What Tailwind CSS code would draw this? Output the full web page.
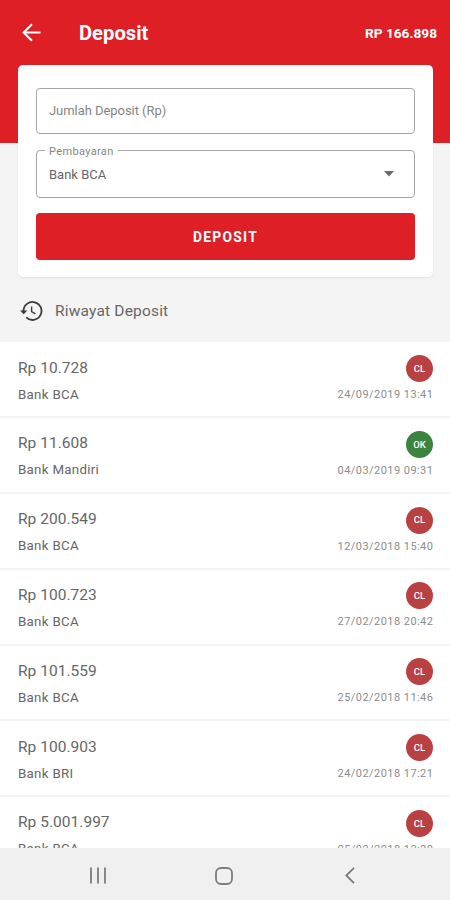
<!DOCTYPE html>
<html lang="id">
<head>
    <meta charset="UTF-8">
    <meta name="viewport" content="width=device-width, initial-scale=1.0">
    <title>Deposit</title>
    <script src="https://cdn.jsdelivr.net/npm/@tailwindcss/browser@4"></script>
</head>
<body class="bg-[#f4f4f4] font-['Roboto',sans-serif] text-[#666666] w-[450px] h-[900px] overflow-hidden flex flex-col">

    <header class="bg-[#de1f26] h-[143px] shrink-0 text-white">
        <div class="flex items-center h-[66px] pl-[22px] pr-[13px]">
            <svg class="w-[19px] h-[19px] -mt-[2px]" viewBox="0 0 19 19" fill="none" stroke="currentColor" stroke-width="2.1"><path d="M18.5 9.5H2M10 1.2L1.7 9.5l8.3 8.3"/></svg>
            <h1 class="ml-[38px] text-[20.2px] font-bold pt-px">Deposit</h1>
            <span class="ml-auto text-[13.7px] font-bold">RP 166.898</span>
        </div>
    </header>

    <section class="ml-[18px] mr-[17px] -mt-[78px] h-[212px] shrink-0 bg-white rounded-[5px] shadow-[0_1px_2px_rgba(0,0,0,0.08)] px-[18px] pt-[23px]">
        <div class="h-[46px] border border-[#a6a6a6] rounded-[4px] flex items-center px-3 text-[13px] tracking-[-0.05px] text-[#858585]">Jumlah Deposit (Rp)</div>
        <div class="relative mt-4 h-[48px] border border-[#a6a6a6] rounded-[4px] flex items-center justify-between pl-3 pr-5 text-[13px]">
            <span class="absolute left-2 -top-[6px] px-1 bg-white text-[11px] leading-[14px] tracking-[0.35px] text-[#858585]">Pembayaran</span>
            <span class="pt-px">Bank BCA</span>
            <svg class="w-[10px] h-[6px]" viewBox="0 0 10 6" fill="#6a6a6a"><path d="M0 0h10L5 5.5z"/></svg>
        </div>
        <button class="mt-[15px] w-full h-[47px] pt-[2px] bg-[#de1f26] rounded-[4px] text-white text-[13.8px] font-bold tracking-[1.3px]">DEPOSIT</button>
    </section>

    <div class="h-[65.4px] shrink-0 flex items-center gap-3 pl-5 pt-[4px]">
        <svg class="w-[23px] h-[20px] -mt-[2px]" viewBox="0 0 23 20" fill="none" stroke="#3c3c3c" stroke-width="1.8"><path d="M3.5 10a9 9 0 1 1 2.7 6.4"/><path d="M0 9.6h7.4L3.7 13.3z" fill="#3c3c3c" stroke="none"/><path d="M11.6 5.5v5.1l3.8 2.3" stroke-width="1.4"/></svg>
        <h2 class="text-[15.5px] tracking-[0.18px]">Riwayat Deposit</h2>
    </div>

    <ul id="history" class="flex-1 min-h-0 overflow-hidden bg-white"></ul>

    <nav class="h-[52px] shrink-0 bg-[#f0f0f0] flex items-center pl-[90px] text-[#7c7c7c]">
        <svg class="w-[16px] h-[17px] mt-[3px]" viewBox="0 0 16 17" fill="none" stroke="currentColor" stroke-width="1.8"><path d="M1 .5v16M8 .5v16M15 .5v16"/></svg>
        <svg class="w-[18px] h-[18px] mt-[3px] ml-[109px]" viewBox="0 0 18 18" fill="none" stroke="currentColor" stroke-width="1.8"><rect x="1" y="1" width="16" height="16" rx="5"/></svg>
        <svg class="w-[10px] h-[17px] mt-[3px] ml-[112px]" viewBox="0 0 10 17" fill="none" stroke="currentColor" stroke-width="1.8"><path d="M9 .8L1.3 8.5 9 16.2"/></svg>
    </nav>

    <template id="row">
        <li class="h-[75.8px] border-b-2 border-[#f3f3f3] flex justify-between pl-[18px] pr-[17px]">
            <div class="pt-[14.2px]">
                <p class="amount text-[15.5px] leading-[22px] tracking-[0.03px]"></p>
                <p class="bank mt-[6px] text-[13.3px] leading-[20px] tracking-[0.3px]"></p>
            </div>
            <div class="pt-[12.6px] flex flex-col items-end">
                <span class="status w-[27px] h-[27px] pt-px rounded-full flex items-center justify-center text-white text-[9.5px] font-medium"></span>
                <time class="mt-[5px] text-[11px] leading-[16px] tracking-[0.45px] text-[#8c8c8c] -mr-[0.4px]"></time>
            </div>
        </li>
    </template>

    <script>
        const deposits = [
            ['Rp 10.728', 'Bank BCA', 'CL', '24/09/2019 13:41'],
            ['Rp 11.608', 'Bank Mandiri', 'OK', '04/03/2019 09:31'],
            ['Rp 200.549', 'Bank BCA', 'CL', '12/03/2018 15:40'],
            ['Rp 100.723', 'Bank BCA', 'CL', '27/02/2018 20:42'],
            ['Rp 101.559', 'Bank BCA', 'CL', '25/02/2018 11:46'],
            ['Rp 100.903', 'Bank BRI', 'CL', '24/02/2018 17:21'],
            ['Rp 5.001.997', 'Bank BCA', 'CL', '05/02/2018 12:20'],
        ];
        const colors = { CL: 'bg-[#b94141]', OK: 'bg-[#3b833f]' };
        const list = document.getElementById('history');
        const tpl = document.getElementById('row');

        deposits.forEach(([amount, bank, status, time]) => {
            const row = tpl.content.cloneNode(true);
            row.querySelector('.amount').textContent = amount;
            row.querySelector('.bank').textContent = bank;
            row.querySelector('.status').textContent = status;
            row.querySelector('.status').classList.add(colors[status]);
            row.querySelector('time').textContent = time;
            list.appendChild(row);
        });
    </script>
</body>
</html>
